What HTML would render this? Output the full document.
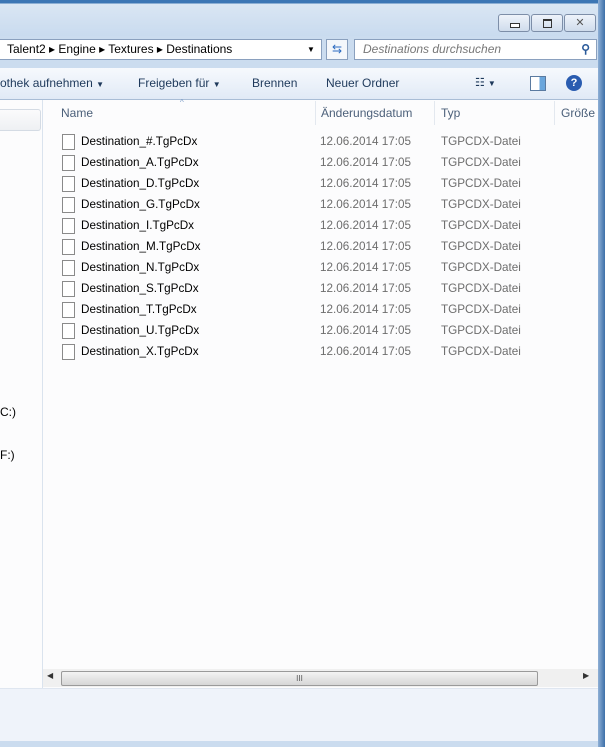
<!DOCTYPE html><html><head><style>
body{margin:0;width:605px;height:747px;overflow:hidden;font-family:"Liberation Sans",sans-serif;font-size:12px;position:relative;background:#c4d6ec}
.a{position:absolute;white-space:nowrap}
.top{left:0;top:0;width:605px;height:36px;background:linear-gradient(#3c76b4 0,#3c76b4 3px,#dae6f3 4px,#c9dbef 36px)}
.frame{left:0;top:36px;width:600px;height:711px;background:#cbdcef}
.rb{left:598px;top:0;width:7px;height:747px;background:linear-gradient(90deg,#8fb0d6,#3d6fa8)}
.btn{top:14px;height:16px;border:1px solid #7d8ea8;border-radius:3px;background:linear-gradient(#eef3fa,#cfdcec)}
.addr{left:0;top:39px;width:322px;height:21px;background:#fff;border:1px solid #8aa0be;border-left:none;box-sizing:border-box;color:#000;line-height:19px;font-size:12px}
.search{left:354px;top:39px;width:243px;height:21px;background:#fff;border:1px solid #8aa0be;box-sizing:border-box;color:#777;font-style:italic;line-height:19px;padding-left:8px}
.tb{left:0;top:68px;width:598px;height:31px;background:linear-gradient(#f6f9fd,#e1eaf6);border-bottom:1px solid #a9bdd6;color:#1e395b;line-height:31px}
.content{left:0;top:100px;width:598px;height:588px;background:#fcfcfd}
.left{left:0;top:100px;width:42px;height:588px;background:#fcfcfd;border-right:1px solid #dae3ee}
.hdr{top:100px;height:26px;line-height:26px;color:#4c607a}
.row{left:62px;height:21px;line-height:21px;color:#000;font-size:11.7px}
.row .ic{position:absolute;left:0;top:3px;width:11px;height:14px;border:1px solid #8a8a8a;background:#fff}
.row .n{position:absolute;left:19px}
.row .d{position:absolute;left:258px;color:#6d6d6d}
.row .t{position:absolute;left:379px;color:#6d6d6d}
.status{left:0;top:688px;width:598px;height:52px;background:#eff3fa;border-top:1px solid #dfe6f0}
</style></head><body>
<div class="a top"></div><div class="a frame"></div>
<div class="a rb"></div>
<div class="a btn" style="left:498px;width:30px"><div class="a" style="left:11px;top:8px;width:8px;height:3px;border:1px solid #333;background:#fff"></div></div>
<div class="a btn" style="left:531px;width:30px"><div class="a" style="left:11px;top:4px;width:7px;height:6px;border:1px solid #333;border-top-width:2px"></div></div>
<div class="a btn" style="left:564px;width:30px;color:#555;text-align:center;font-size:11px;line-height:16px">✕</div>
<div class="a addr"><span style="margin-left:7px">Talent2 ▸ Engine ▸ Textures ▸ Destinations</span><span class="a" style="left:307px;top:0;font-size:8px">▼</span></div>
<div class="a" style="left:326px;top:39px;width:22px;height:21px;border:1px solid #8aa0be;box-sizing:border-box;background:#f4f7fb;color:#2a6ac0;font-size:12px;text-align:center;line-height:19px">⇆</div>
<div class="a search">Destinations durchsuchen<span class="a" style="right:6px;top:0;color:#2a5a9a;font-style:normal;font-weight:bold">⚲</span></div>
<div class="a tb">
<span class="a" style="left:0">othek aufnehmen <span style="font-size:8px">▼</span></span>
<span class="a" style="left:138px">Freigeben für <span style="font-size:8px">▼</span></span>
<span class="a" style="left:252px">Brennen</span>
<span class="a" style="left:326px">Neuer Ordner</span>
<span class="a" style="left:475px;font-size:11px">☷ <span style="font-size:8px">▼</span></span>
<div class="a" style="left:530px;top:8px;width:14px;height:13px;border:1px solid #5a7aa0;background:linear-gradient(90deg,#fff 60%,#6aa6dc 60%)"></div>
<div class="a" style="left:566px;top:7px;width:16px;height:16px;border-radius:50%;background:#2a5cb0;color:#fff;font-weight:bold;text-align:center;line-height:16px;font-size:11px">?</div>
</div>
<div class="a content"></div>
<div class="a left"><div class="a" style="left:0;top:9px;width:40px;height:20px;border:1px solid #d4dbe4;border-left:none;border-radius:0 3px 3px 0;background:linear-gradient(#fbfbfc,#eef0f3)"></div>
<span class="a" style="left:0;top:305px;color:#000">C:)</span><span class="a" style="left:0;top:348px;color:#000">F:)</span></div>
<div class="a hdr" style="left:61px">Name</div>
<div class="a" style="left:180px;top:98px;font-size:8px;color:#7b9cc6">^</div>
<div class="a" style="left:315px;top:101px;width:1px;height:24px;background:#e3e8ef"></div>
<div class="a hdr" style="left:321px">Änderungsdatum</div>
<div class="a" style="left:434px;top:101px;width:1px;height:24px;background:#e3e8ef"></div>
<div class="a hdr" style="left:441px">Typ</div>
<div class="a" style="left:554px;top:101px;width:1px;height:24px;background:#e3e8ef"></div>
<div class="a hdr" style="left:561px">Größe</div>
<div class="a row" style="top:131px"><span class="ic"></span><span class="n">Destination_#.TgPcDx</span><span class="d">12.06.2014 17:05</span><span class="t">TGPCDX-Datei</span></div>
<div class="a row" style="top:152px"><span class="ic"></span><span class="n">Destination_A.TgPcDx</span><span class="d">12.06.2014 17:05</span><span class="t">TGPCDX-Datei</span></div>
<div class="a row" style="top:173px"><span class="ic"></span><span class="n">Destination_D.TgPcDx</span><span class="d">12.06.2014 17:05</span><span class="t">TGPCDX-Datei</span></div>
<div class="a row" style="top:194px"><span class="ic"></span><span class="n">Destination_G.TgPcDx</span><span class="d">12.06.2014 17:05</span><span class="t">TGPCDX-Datei</span></div>
<div class="a row" style="top:215px"><span class="ic"></span><span class="n">Destination_I.TgPcDx</span><span class="d">12.06.2014 17:05</span><span class="t">TGPCDX-Datei</span></div>
<div class="a row" style="top:236px"><span class="ic"></span><span class="n">Destination_M.TgPcDx</span><span class="d">12.06.2014 17:05</span><span class="t">TGPCDX-Datei</span></div>
<div class="a row" style="top:257px"><span class="ic"></span><span class="n">Destination_N.TgPcDx</span><span class="d">12.06.2014 17:05</span><span class="t">TGPCDX-Datei</span></div>
<div class="a row" style="top:278px"><span class="ic"></span><span class="n">Destination_S.TgPcDx</span><span class="d">12.06.2014 17:05</span><span class="t">TGPCDX-Datei</span></div>
<div class="a row" style="top:299px"><span class="ic"></span><span class="n">Destination_T.TgPcDx</span><span class="d">12.06.2014 17:05</span><span class="t">TGPCDX-Datei</span></div>
<div class="a row" style="top:320px"><span class="ic"></span><span class="n">Destination_U.TgPcDx</span><span class="d">12.06.2014 17:05</span><span class="t">TGPCDX-Datei</span></div>
<div class="a row" style="top:341px"><span class="ic"></span><span class="n">Destination_X.TgPcDx</span><span class="d">12.06.2014 17:05</span><span class="t">TGPCDX-Datei</span></div>
<div class="a" style="left:43px;top:669px;width:555px;height:18px;background:#f0f0f0"></div>
<div class="a" style="left:47px;top:671px;font-size:8px;color:#333">◀</div>
<div class="a" style="left:583px;top:671px;font-size:8px;color:#333">▶</div>
<div class="a" style="left:61px;top:671px;width:475px;height:13px;border:1px solid #9a9a9a;border-radius:2px;background:linear-gradient(#f3f3f3,#d6d6d6);text-align:center;font-size:8px;line-height:13px;color:#555">III</div>
<div class="a status"></div>
</body></html>
